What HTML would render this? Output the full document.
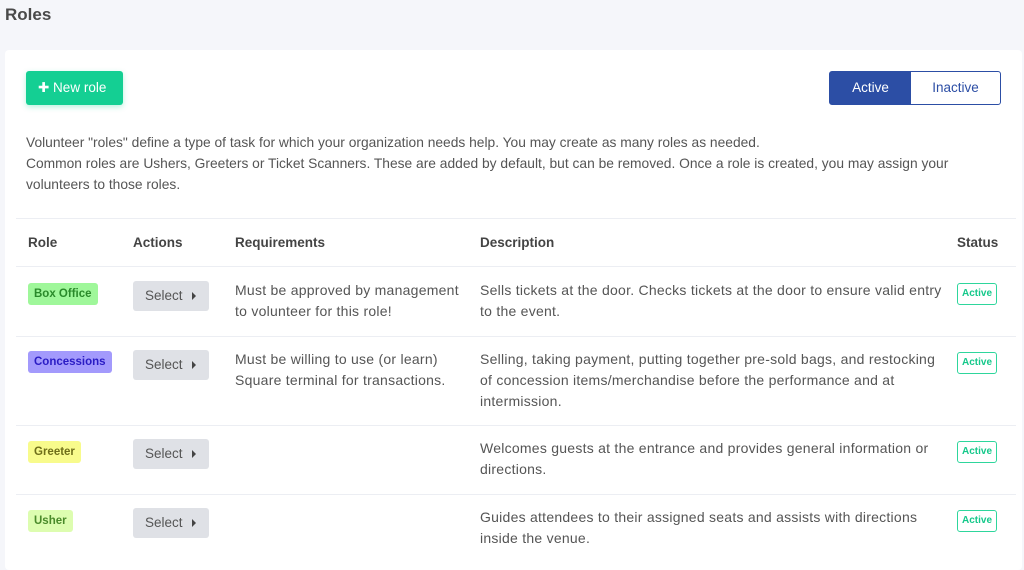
<!DOCTYPE html>
<html><head><meta charset="utf-8"><style>
*{margin:0;padding:0;box-sizing:border-box}
body{width:1024px;height:557px;overflow:hidden;background:#f5f6fa;font-family:"Liberation Sans",sans-serif;color:#555;font-size:13px;position:relative}
.a{position:absolute}
h1{position:absolute;left:5px;top:5px;font-size:17px;font-weight:bold;color:#4a4a4a}
.card{position:absolute;left:5px;top:50px;width:1017px;height:520px;background:#fff;border-radius:4px}
.new{left:26px;top:71px;width:97px;height:34px;background:#14cf93;color:#fff;border-radius:3px;box-shadow:0 2px 6px rgba(20,207,147,.3);font-size:13.5px;line-height:34px;padding-left:12px}
.tog{left:829px;top:71px;width:172px;height:34px;border:1px solid #2c4ea5;border-radius:3px;display:flex;font-size:13.5px}
.tog div{flex:1;text-align:center;line-height:32px}
.tog .on{background:#2c4ea5;color:#fff;flex:0 0 81px}
.tog .off{color:#2c4ea5}
.txt{left:26px;top:132px;width:990px;line-height:21px;color:#555;font-size:13.8px;white-space:nowrap}
.line{left:16px;width:1000px;height:1px;background:#eceef3}
.th{font-weight:bold;color:#444;top:235px;font-size:13.5px}
.badge{font-size:11.5px;font-weight:bold;border-radius:3px;height:22px;line-height:22px;padding:0 6px}
.sel{width:76px;height:30px;background:#dfe1e6;border-radius:3px;color:#555;line-height:30px;padding-left:12px;font-size:13.5px}
.sel:after{content:"";position:absolute;left:59px;top:11px;border-left:4px solid #444;border-top:4px solid transparent;border-bottom:4px solid transparent}
.cell{line-height:21px;font-size:14px;letter-spacing:.25px;white-space:nowrap}
.st{left:957px;width:40px;height:22px;border:1px solid #2ed69c;color:#14c88a;font-size:10px;font-weight:bold;border-radius:3px;text-align:center;line-height:20px}
</style></head><body>
<h1>Roles</h1>
<div class="card"></div>
<div class="a new">✚ New role</div>
<div class="a tog"><div class="on">Active</div><div class="off">Inactive</div></div>
<div class="a txt">Volunteer "roles" define a type of task for which your organization needs help. You may create as many roles as needed.<br>Common roles are Ushers, Greeters or Ticket Scanners. These are added by default, but can be removed. Once a role is created, you may assign your<br>volunteers to those roles.</div>
<div class="a line" style="top:218px"></div>
<div class="a th" style="left:28px">Role</div>
<div class="a th" style="left:133px">Actions</div>
<div class="a th" style="left:235px">Requirements</div>
<div class="a th" style="left:480px">Description</div>
<div class="a th" style="left:957px">Status</div>
<div class="a line" style="top:266px"></div>

<div class="a badge" style="left:28px;top:283px;background:#9ff79a;color:#2a8a2a">Box Office</div>
<div class="a sel" style="left:133px;top:281px">Select</div>
<div class="a cell" style="left:235px;top:280px">Must be approved by management<br>to volunteer for this role!</div>
<div class="a cell" style="left:480px;top:280px">Sells tickets at the door. Checks tickets at the door to ensure valid entry<br>to the event.</div>
<div class="a st" style="top:283px">Active</div>
<div class="a line" style="top:336px"></div>

<div class="a badge" style="left:28px;top:351px;background:#a39afc;color:#2a1cc4">Concessions</div>
<div class="a sel" style="left:133px;top:350px">Select</div>
<div class="a cell" style="left:235px;top:349px">Must be willing to use (or learn)<br>Square terminal for transactions.</div>
<div class="a cell" style="left:480px;top:349px">Selling, taking payment, putting together pre-sold bags, and restocking<br>of concession items/merchandise before the performance and at<br>intermission.</div>
<div class="a st" style="top:352px">Active</div>
<div class="a line" style="top:425px"></div>

<div class="a badge" style="left:28px;top:441px;background:#f8fb8c;color:#6f6f1a">Greeter</div>
<div class="a sel" style="left:133px;top:439px">Select</div>
<div class="a cell" style="left:480px;top:438px">Welcomes guests at the entrance and provides general information or<br>directions.</div>
<div class="a st" style="top:441px">Active</div>
<div class="a line" style="top:494px"></div>

<div class="a badge" style="left:28px;top:510px;background:#ddfdb0;color:#4a8a2a">Usher</div>
<div class="a sel" style="left:133px;top:508px">Select</div>
<div class="a cell" style="left:480px;top:507px">Guides attendees to their assigned seats and assists with directions<br>inside the venue.</div>
<div class="a st" style="top:510px">Active</div>
</body></html>
